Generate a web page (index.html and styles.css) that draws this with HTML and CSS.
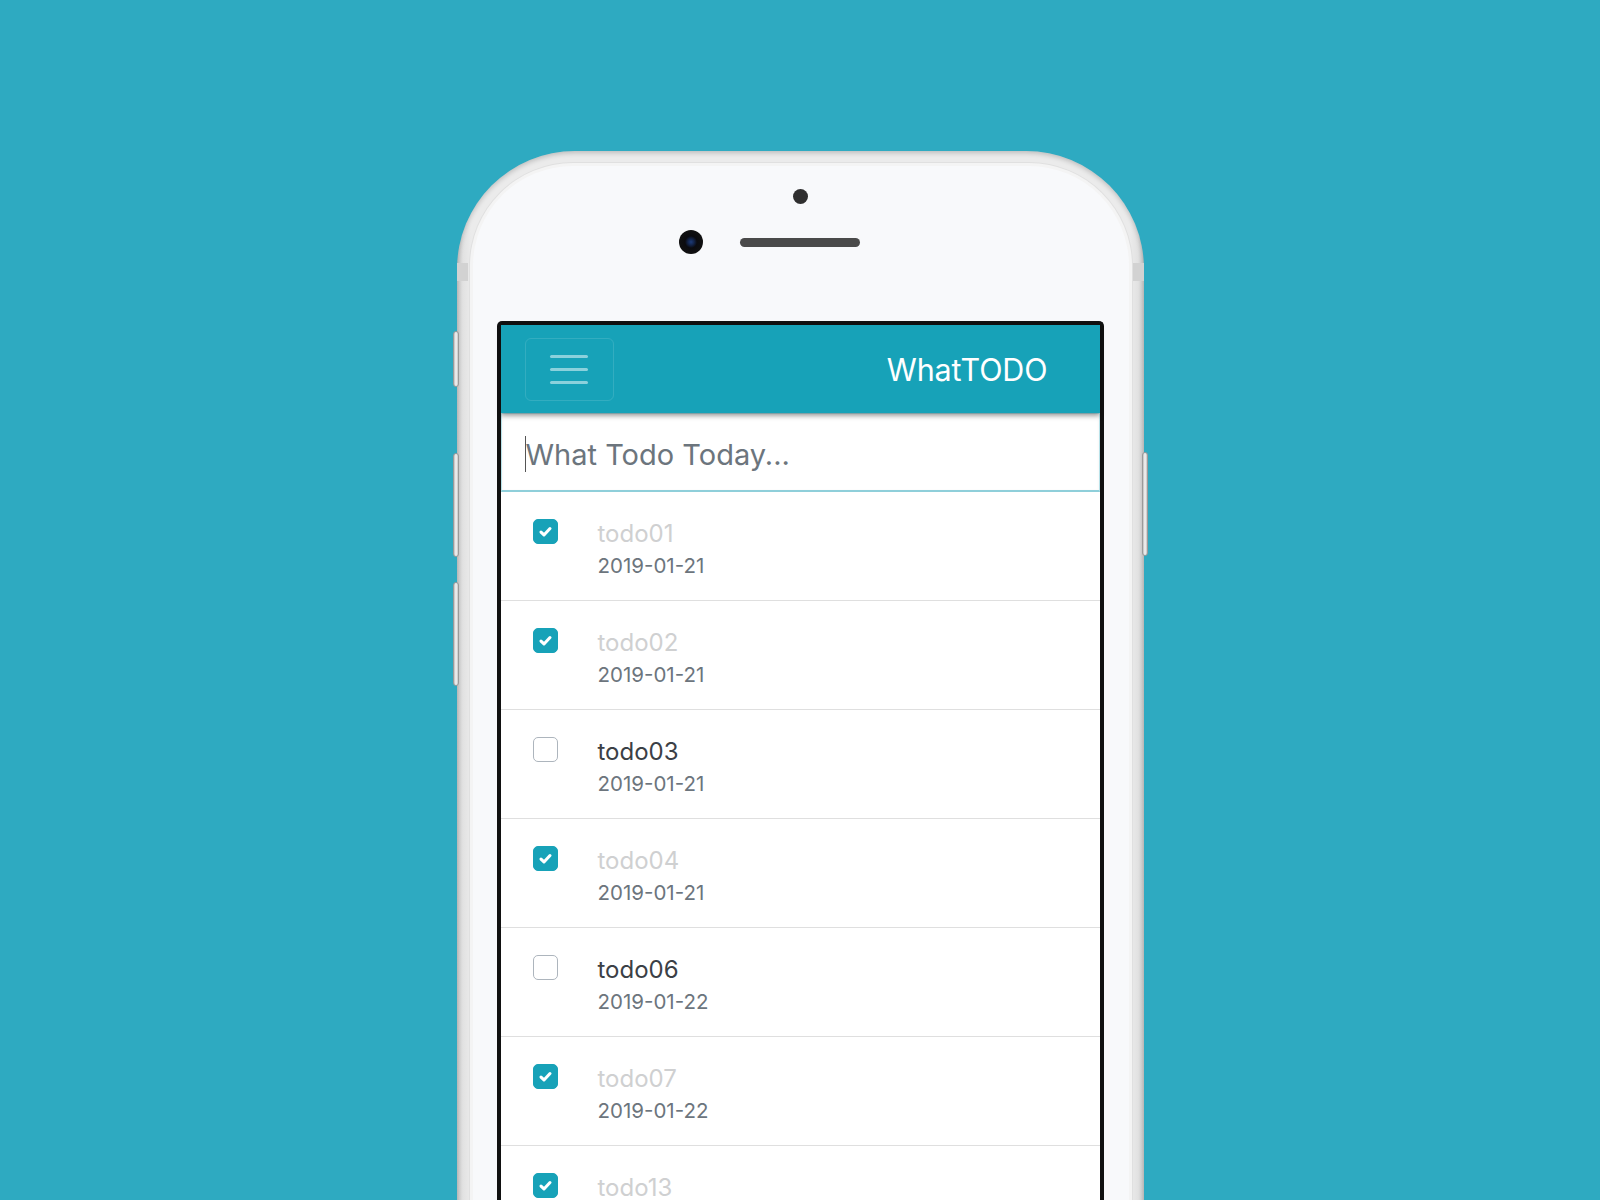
FILE: index.html
```html
<!DOCTYPE html>
<html lang="en">
<head>
<meta charset="utf-8">
<title>WhatTODO</title>
<link rel="stylesheet" href="styles.css">
</head>
<body>
<div class="stage">
  <div class="phone">
    <span class="side-btn left b1"></span>
    <span class="side-btn left b2"></span>
    <span class="side-btn left b3"></span>
    <span class="side-btn right b4"></span>
    <span class="antenna left"></span>
    <span class="antenna right"></span>
    <div class="face">
      <div class="face-top">
        <span class="sensor-dot"></span>
        <div class="sensors">
          <span class="camera"></span>
          <span class="speaker"></span>
          <span class="spacer"></span>
        </div>
      </div>
      <div class="screen">
        <header class="navbar">
          <button class="toggler" type="button" aria-label="Menu">
            <span class="bar"></span><span class="bar"></span><span class="bar"></span>
          </button>
          <span class="brand">WhatTODO</span>
        </header>
        <div class="new-todo"><span class="caret"></span><span class="placeholder">What Todo Today...</span></div>
        <ul class="todos">
          <li class="todo done">
            <span class="check"><svg viewBox="0 0 24 24"><path d="M7.3 12.6l3.1 3 6.3-6.7"/></svg></span>
            <div class="info"><div class="title">todo01</div><div class="date">2019-01-21</div></div>
          </li>
          <li class="todo done">
            <span class="check"><svg viewBox="0 0 24 24"><path d="M7.3 12.6l3.1 3 6.3-6.7"/></svg></span>
            <div class="info"><div class="title">todo02</div><div class="date">2019-01-21</div></div>
          </li>
          <li class="todo">
            <span class="check"></span>
            <div class="info"><div class="title">todo03</div><div class="date">2019-01-21</div></div>
          </li>
          <li class="todo done">
            <span class="check"><svg viewBox="0 0 24 24"><path d="M7.3 12.6l3.1 3 6.3-6.7"/></svg></span>
            <div class="info"><div class="title">todo04</div><div class="date">2019-01-21</div></div>
          </li>
          <li class="todo">
            <span class="check"></span>
            <div class="info"><div class="title">todo06</div><div class="date">2019-01-22</div></div>
          </li>
          <li class="todo done">
            <span class="check"><svg viewBox="0 0 24 24"><path d="M7.3 12.6l3.1 3 6.3-6.7"/></svg></span>
            <div class="info"><div class="title">todo07</div><div class="date">2019-01-22</div></div>
          </li>
          <li class="todo done">
            <span class="check"><svg viewBox="0 0 24 24"><path d="M7.3 12.6l3.1 3 6.3-6.7"/></svg></span>
            <div class="info"><div class="title">todo13</div></div>
          </li>
        </ul>
      </div>
    </div>
  </div>
</div>
</body>
</html>
```

FILE: styles.css
```css
* { box-sizing: border-box; }
html, body {
  margin: 0;
  padding: 0;
  height: 1200px;
  overflow: hidden;
  background: #2eaac1;
  font-family: Inter, "Liberation Sans", Arial, sans-serif;
}
.stage {
  display: flex;
  justify-content: center;
  padding-top: 151px;
}
.phone {
  position: relative;
  width: 687px;
  height: 1150px;
  padding: 15px 15px 0 16px;
  border-radius: 118px 118px 0 0;
  background: linear-gradient(90deg, #c9c9c9 0px, #e2e2e2 6px, #ebebeb 14px, #ebebeb calc(100% - 14px), #e2e2e2 calc(100% - 6px), #c9c9c9 100%);
  box-shadow: inset 0 2px 5px rgba(0,0,0,0.2);
}
.side-btn {
  position: absolute;
  width: 6px;
  border-radius: 3px;
  background: linear-gradient(90deg, #bdbdbd, #f7f7f7 50%, #c4c4c4);
  border: 1px solid #9a9a9a;
}
.side-btn.left { left: -4px; }
.side-btn.right { right: -4px; }
.b1 { top: 180px; height: 56px; }
.b2 { top: 302px; height: 104px; }
.b3 { top: 431px; height: 104px; }
.b4 { top: 301px; height: 104px; }
.antenna {
  position: absolute;
  top: 112px;
  width: 11px;
  height: 18px;
  background: #d2d2d2;
}
.antenna.left { left: 0; }
.antenna.right { right: 0; }
.face {
  height: 100%;
  background: #f8f9fb;
  border-radius: 100px 100px 0 0;
  box-shadow: 0 0 0 3px #f4f4f4, 0 0 0 4px #e0e0e0;
  padding: 0 25px 0 24px;
  display: flex;
  flex-direction: column;
}
.face-top {
  height: 155px;
  display: flex;
  flex-direction: column;
  align-items: center;
}
.sensor-dot {
  width: 15px;
  height: 15px;
  border-radius: 50%;
  background: #2f2f2f;
  margin-top: 23px;
}
.sensors {
  display: flex;
  align-items: center;
  gap: 37px;
  margin-top: 26px;
  height: 24px;
}
.camera {
  width: 24px;
  height: 24px;
  border-radius: 50%;
  background: radial-gradient(circle at 50% 50%, #1d3b78 0, #13244a 3px, #0b0b0f 6px, #111 12px);
}
.speaker {
  width: 120px;
  height: 9px;
  border-radius: 5px;
  background: #4a4a4a;
}
.spacer { width: 24px; height: 24px; }
.screen {
  flex: 1;
  border: 4px solid #111;
  border-bottom: 0;
  border-radius: 5px 5px 0 0;
  background: #fff;
  display: flex;
  flex-direction: column;
}
.navbar {
  position: relative;
  z-index: 2;
  height: 88px;
  background: #17a2b8;
  display: flex;
  align-items: center;
  justify-content: space-between;
  padding: 0 52px 0 24px;
  box-shadow: 0 3px 5px rgba(0,0,0,0.35);
}
.toggler {
  width: 89px;
  height: 63px;
  border: 1px solid rgba(255,255,255,0.12);
  border-radius: 6px;
  background: transparent;
  display: flex;
  flex-direction: column;
  align-items: center;
  justify-content: center;
  gap: 10px;
  padding: 0;
}
.bar {
  width: 38px;
  height: 3px;
  border-radius: 2px;
  background: rgba(255,255,255,0.5);
}
.brand {
  color: #fff;
  font-size: 30.5px;
  font-weight: 400;
  letter-spacing: -0.1px;
}
.new-todo {
  position: relative;
  z-index: 1;
  height: 79px;
  display: flex;
  align-items: center;
  padding: 4px 0 0 23px;
  border: 1px solid #b9e2e9;
  border-bottom: 2px solid #8fcfda;
  box-shadow: inset 0 1px 3px rgba(0,0,0,0.06);
}
.caret {
  width: 1px;
  height: 36px;
  background: #555;
}
.placeholder {
  color: #6c757d;
  font-size: 29px;
}
.todos {
  list-style: none;
  margin: 0;
  padding: 0;
}
.todo {
  display: flex;
  align-items: flex-start;
  gap: 40px;
  height: 109px;
  padding: 27px 0 0 32px;
  border-bottom: 1px solid #dfdfdf;
}
.check {
  flex: none;
  width: 25px;
  height: 25px;
  border-radius: 5px;
  border: 1px solid #adb5bd;
  background: #fff;
  display: flex;
  align-items: center;
  justify-content: center;
}
.check svg {
  width: 25px;
  height: 25px;
  fill: none;
  stroke: #fff;
  stroke-width: 3.2;
  stroke-linecap: round;
  stroke-linejoin: round;
}
.done .check {
  background: #17a2b8;
  border-color: #17a2b8;
}
.info { margin-top: 0; }
.title {
  font-size: 24px;
  line-height: 30px;
  color: #3b4046;
}
.done .title { color: #cfd0d1; }
.date {
  margin-top: 3px;
  font-size: 20.5px;
  line-height: 28px;
  color: #6c757d;
}
```
